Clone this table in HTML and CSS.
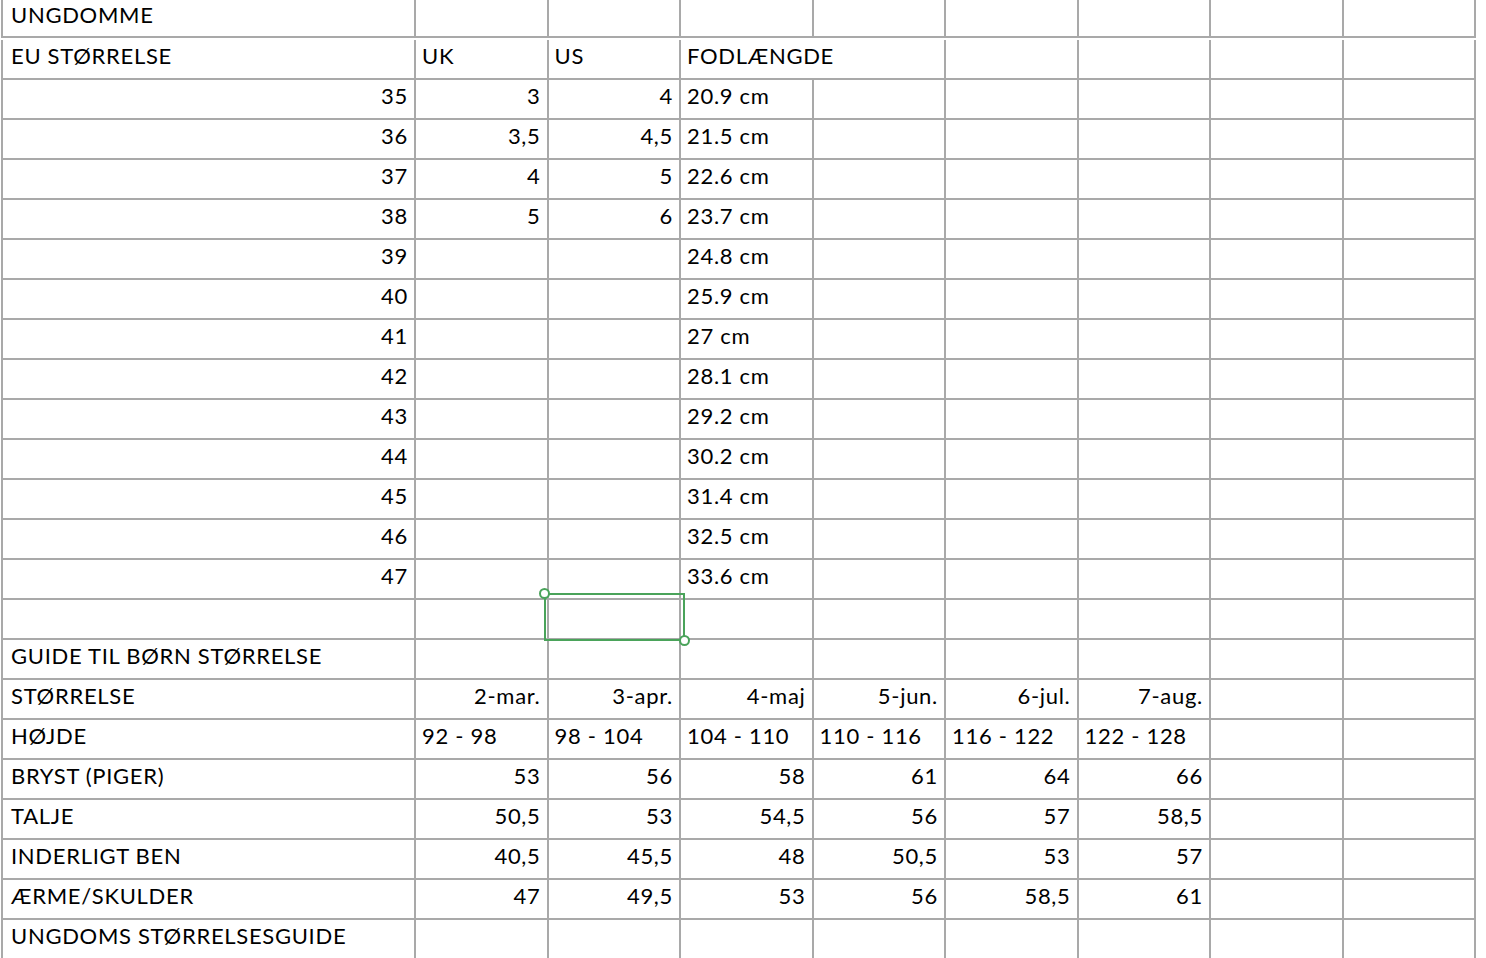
FILE: index.html
```html
<!DOCTYPE html>
<html lang="da">
<head>
<meta charset="utf-8">
<title>Størrelsesguide</title>
<link rel="stylesheet" href="styles.css">
</head>
<body>
<div class="sheet">
  <div class="grid">
    <!-- row 0 -->
    <div class="c a top">UNGDOMME</div><div class="c top"></div><div class="c top"></div><div class="c top"></div><div class="c top"></div><div class="c top"></div><div class="c top"></div><div class="c top"></div><div class="c top"></div>
    <!-- row 1 -->
    <div class="c a">EU STØRRELSE</div><div class="c">UK</div><div class="c">US</div><div class="c span2">FODLÆNGDE</div><div class="c"></div><div class="c"></div><div class="c"></div><div class="c"></div>
    <!-- shoe rows -->
    <div class="c a r">35</div><div class="c r">3</div><div class="c r">4</div><div class="c">20.9 cm</div><div class="c"></div><div class="c"></div><div class="c"></div><div class="c"></div><div class="c"></div>
    <div class="c a r">36</div><div class="c r">3,5</div><div class="c r">4,5</div><div class="c">21.5 cm</div><div class="c"></div><div class="c"></div><div class="c"></div><div class="c"></div><div class="c"></div>
    <div class="c a r">37</div><div class="c r">4</div><div class="c r">5</div><div class="c">22.6 cm</div><div class="c"></div><div class="c"></div><div class="c"></div><div class="c"></div><div class="c"></div>
    <div class="c a r">38</div><div class="c r">5</div><div class="c r">6</div><div class="c">23.7 cm</div><div class="c"></div><div class="c"></div><div class="c"></div><div class="c"></div><div class="c"></div>
    <div class="c a r">39</div><div class="c"></div><div class="c"></div><div class="c">24.8 cm</div><div class="c"></div><div class="c"></div><div class="c"></div><div class="c"></div><div class="c"></div>
    <div class="c a r">40</div><div class="c"></div><div class="c"></div><div class="c">25.9 cm</div><div class="c"></div><div class="c"></div><div class="c"></div><div class="c"></div><div class="c"></div>
    <div class="c a r">41</div><div class="c"></div><div class="c"></div><div class="c">27 cm</div><div class="c"></div><div class="c"></div><div class="c"></div><div class="c"></div><div class="c"></div>
    <div class="c a r">42</div><div class="c"></div><div class="c"></div><div class="c">28.1 cm</div><div class="c"></div><div class="c"></div><div class="c"></div><div class="c"></div><div class="c"></div>
    <div class="c a r">43</div><div class="c"></div><div class="c"></div><div class="c">29.2 cm</div><div class="c"></div><div class="c"></div><div class="c"></div><div class="c"></div><div class="c"></div>
    <div class="c a r">44</div><div class="c"></div><div class="c"></div><div class="c">30.2 cm</div><div class="c"></div><div class="c"></div><div class="c"></div><div class="c"></div><div class="c"></div>
    <div class="c a r">45</div><div class="c"></div><div class="c"></div><div class="c">31.4 cm</div><div class="c"></div><div class="c"></div><div class="c"></div><div class="c"></div><div class="c"></div>
    <div class="c a r">46</div><div class="c"></div><div class="c"></div><div class="c">32.5 cm</div><div class="c"></div><div class="c"></div><div class="c"></div><div class="c"></div><div class="c"></div>
    <div class="c a r">47</div><div class="c"></div><div class="c"></div><div class="c">33.6 cm</div><div class="c"></div><div class="c"></div><div class="c"></div><div class="c"></div><div class="c"></div>
    <!-- empty row -->
    <div class="c a"></div><div class="c"></div><div class="c"></div><div class="c"></div><div class="c"></div><div class="c"></div><div class="c"></div><div class="c"></div><div class="c"></div>
    <!-- kids guide -->
    <div class="c a">GUIDE TIL BØRN STØRRELSE</div><div class="c"></div><div class="c"></div><div class="c"></div><div class="c"></div><div class="c"></div><div class="c"></div><div class="c"></div><div class="c"></div>
    <div class="c a">STØRRELSE</div><div class="c r">2-mar.</div><div class="c r">3-apr.</div><div class="c r">4-maj</div><div class="c r">5-jun.</div><div class="c r">6-jul.</div><div class="c r">7-aug.</div><div class="c"></div><div class="c"></div>
    <div class="c a">HØJDE</div><div class="c">92 - 98</div><div class="c">98 - 104</div><div class="c">104 - 110</div><div class="c">110 - 116</div><div class="c">116 - 122</div><div class="c">122 - 128</div><div class="c"></div><div class="c"></div>
    <div class="c a">BRYST (PIGER)</div><div class="c r">53</div><div class="c r">56</div><div class="c r">58</div><div class="c r">61</div><div class="c r">64</div><div class="c r">66</div><div class="c"></div><div class="c"></div>
    <div class="c a">TALJE</div><div class="c r">50,5</div><div class="c r">53</div><div class="c r">54,5</div><div class="c r">56</div><div class="c r">57</div><div class="c r">58,5</div><div class="c"></div><div class="c"></div>
    <div class="c a">INDERLIGT BEN</div><div class="c r">40,5</div><div class="c r">45,5</div><div class="c r">48</div><div class="c r">50,5</div><div class="c r">53</div><div class="c r">57</div><div class="c"></div><div class="c"></div>
    <div class="c a">ÆRME/SKULDER</div><div class="c r">47</div><div class="c r">49,5</div><div class="c r">53</div><div class="c r">56</div><div class="c r">58,5</div><div class="c r">61</div><div class="c"></div><div class="c"></div>
    <div class="c a">UNGDOMS STØRRELSESGUIDE</div><div class="c"></div><div class="c"></div><div class="c"></div><div class="c"></div><div class="c"></div><div class="c"></div><div class="c"></div><div class="c"></div>
  </div>
  <div class="selection">
    <span class="handle tl"></span>
    <span class="handle br"></span>
  </div>
</div>
</body>
</html>
```

FILE: styles.css
```css
html, body {
  margin: 0;
  padding: 0;
  background: #ffffff;
}

.sheet {
  position: relative;
  width: 1486px;
  height: 958px;
  overflow: hidden;
}

.grid {
  display: grid;
  grid-template-columns: 415px repeat(8, 132.5px);
  grid-auto-rows: 40px;
  margin-left: 1px;
  font-family: "Lato", "Open Sans", sans-serif;
  font-size: 22px;
  letter-spacing: 0.7px;
  color: #000000;
}

.c {
  box-sizing: border-box;
  height: 40px;
  border-right: 2px solid #a9a9a9;
  border-bottom: 2px solid #a9a9a9;
  padding: 0 6px 0 6px;
  line-height: 32px;
  white-space: nowrap;
  overflow: visible;
}

.c.top {
  height: 38px;
  line-height: 30px;
}

.grid > .top {
  margin-bottom: -2px;
}

.a {
  border-left: 2px solid #a9a9a9;
  padding-left: 8px;
}

.r {
  text-align: right;
}

.span2 {
  grid-column: span 2;
}

.selection {
  position: absolute;
  left: 544px;
  top: 593px;
  width: 141px;
  height: 48px;
  box-sizing: border-box;
  border: 2px solid #4aa35a;
}

.handle {
  position: absolute;
  width: 11px;
  height: 11px;
  box-sizing: border-box;
  border: 2px solid #4aa35a;
  border-radius: 50%;
  background: #ffffff;
}

.handle.tl {
  left: -7px;
  top: -7px;
}

.handle.br {
  right: -7px;
  bottom: -7px;
}
```
